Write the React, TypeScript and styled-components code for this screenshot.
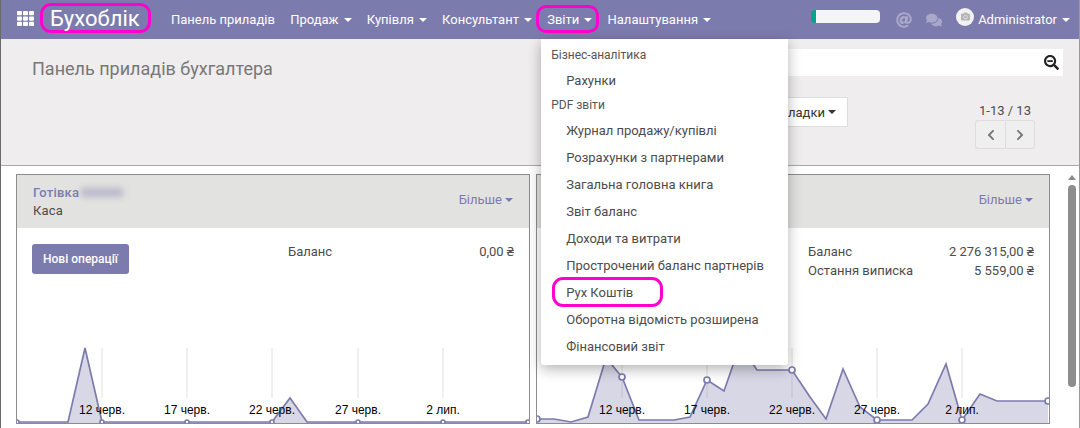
import styled, { createGlobalStyle } from 'styled-components';
import { FaAt, FaCamera, FaChevronLeft, FaChevronRight, FaComments, FaSearchMinus, FaTh } from 'react-icons/fa';

const purple = '#7c7bad';

const GlobalStyle = createGlobalStyle`
  html, body {
    margin: 0;
    height: 100%;
    overflow: hidden;
    background: #fff;
    font-family: Roboto, "Noto Sans", sans-serif;
    font-size: 13px;
    color: #4c4c4c;
  }
`;

const Page = styled.div`
  display: flex;
  flex-direction: column;
  height: 428px;
  border-left: 1px solid #6a6a6a;
  border-right: 1px solid #9a9a9a;
`;

const NavBar = styled.nav`
  display: flex;
  align-items: center;
  flex: none;
  height: 39px;
  padding: 0 9px 0 16px;
  background: ${purple};
  color: #fff;
`;

const AppsIcon = styled(FaTh)`
  flex: none;
  width: 17px;
  height: 17px;
  margin: -3px 6px 0 0;
`;

const Brand = styled.div`
  display: flex;
  align-items: center;
  flex: none;
  box-sizing: border-box;
  width: 111px;
  height: 30px;
  margin: -3px 20px 0 0;
  padding-left: 7px;
  border: 3px solid #ff00d0;
  border-radius: 11px;
  font-size: 22px;
`;

const NavItem = styled.div<{ $marked?: boolean }>`
  position: relative;
  display: flex;
  align-items: center;
  flex: none;
  height: 39px;
  margin-right: 15.25px;
  white-space: nowrap;

  ${(p) => p.$marked && `
    &::before {
      content: '';
      position: absolute;
      top: 5px;
      left: -11px;
      right: -7px;
      height: 28px;
      box-sizing: border-box;
      border: 3px solid #ff00d0;
      border-radius: 10px;
    }
  `}
`;

const Caret = styled.span<{ $gap?: number }>`
  flex: none;
  width: 0;
  height: 0;
  margin-left: ${(p) => p.$gap ?? 5}px;
  border-top: 4px solid currentColor;
  border-left: 4px solid transparent;
  border-right: 4px solid transparent;
`;

const NavRight = styled.div`
  display: flex;
  align-items: center;
  margin-left: auto;
`;

const Progress = styled.div`
  width: 69px;
  height: 13px;
  margin: -6px 16px 0 0;
  box-sizing: border-box;
  border-left: 5px solid #00a48c;
  border-radius: 4px;
  background: #f5f5f5;
`;

const MutedIcon = styled.span`
  display: flex;
  align-items: center;
  margin-right: 14px;
  font-size: 16px;
  color: #a9a8cb;
`;

const Avatar = styled.div`
  display: flex;
  align-items: center;
  justify-content: center;
  width: 18px;
  height: 18px;
  margin: -6px 4px 0 0;
  border-radius: 50%;
  background: #f2f2f2;
  font-size: 9px;
  color: #b5b5b5;
`;

const UserName = styled.div`
  display: flex;
  align-items: center;
`;

const Dropdown = styled.div`
  position: absolute;
  z-index: 5;
  top: 39px;
  left: -6px;
  width: 247px;
  height: 326px;
  box-sizing: border-box;
  padding-top: 8px;
  background: #fff;
  border-radius: 0 0 3px 3px;
  box-shadow: 0 4px 14px rgba(0, 0, 0, 0.3);
  color: #4c4c4c;
  font-weight: 400;
`;

const MenuHeader = styled.div`
  height: 16px;
  line-height: 16px;
  margin-bottom: 4px;
  padding-left: 10px;
  font-size: 12px;
  color: #555;
`;

const MenuGap = styled.div`
  height: 3px;
`;

const MenuItem = styled.div<{ $marked?: boolean }>`
  position: relative;
  height: 27px;
  line-height: 27px;
  padding-left: 25px;

  ${(p) => p.$marked && `
    &::before {
      content: '';
      position: absolute;
      top: -2px;
      left: 11px;
      width: 111px;
      height: 30px;
      box-sizing: border-box;
      border: 3px solid #ff00d0;
      border-radius: 11px;
    }
  `}
`;

const ControlPanel = styled.div`
  display: flex;
  flex: none;
  box-sizing: border-box;
  height: 127px;
  padding: 10px 16px 0 31px;
  background: #efeded;
  border-bottom: 1px solid #a8a8a8;
`;

const Breadcrumb = styled.div`
  flex: 1;
  padding-top: 10px;
  font-size: 18px;
  line-height: 20px;
  color: #777;
`;

const PanelRight = styled.div`
  display: flex;
  flex-direction: column;
  flex: none;
  width: 515px;
`;

const SearchBox = styled.div`
  display: flex;
  align-items: center;
  justify-content: flex-end;
  height: 27px;
  padding-right: 4px;
  background: #fff;
  font-size: 15px;
  color: #222;
`;

const PanelRow = styled.div`
  display: flex;
  align-items: flex-start;
  justify-content: space-between;
  margin-top: 21px;
`;

const Bookmarks = styled.div`
  display: flex;
  align-items: center;
  justify-content: flex-end;
  width: 170px;
  height: 30px;
  box-sizing: border-box;
  padding: 0 11px;
  margin-left: 130px;
  background: #fff;
  border: 1px solid #ddd;
  color: #333;
`;

const Pager = styled.div`
  display: flex;
  flex-direction: column;
  align-items: center;
  margin-right: 28px;
  margin-top: 6px;
  color: #4c4c4c;
  font-size: 13px;
  line-height: 15px;
`;

const PagerButtons = styled.div`
  display: flex;
  margin-top: 2px;
`;

const PagerButton = styled.div`
  display: flex;
  align-items: center;
  justify-content: center;
  width: 30px;
  height: 29px;
  box-sizing: border-box;
  background: #f0efef;
  border: 1px solid #ddd;
  font-size: 12px;
  color: #777;

  &:first-child {
    border-radius: 3px 0 0 3px;
    border-right: none;
  }

  &:last-child {
    border-radius: 0 3px 3px 0;
  }
`;

const Content = styled.div`
  display: flex;
  flex: 1;
  min-height: 0;
  background: #fff;
`;

const Cards = styled.div`
  display: flex;
  flex: 1;
  gap: 6px;
  padding: 8px 0 0 15px;
`;

const Card = styled.section`
  display: flex;
  flex-direction: column;
  box-sizing: border-box;
  width: 514px;
  height: 250px;
  border: 1px solid #8c8c8c;
`;

const CardHead = styled.header`
  display: flex;
  align-items: center;
  justify-content: space-between;
  flex: none;
  box-sizing: border-box;
  height: 53px;
  padding: 0 16px;
  background: #e2e2e0;
`;

const CardTitle = styled.div`
  display: flex;
  align-items: center;
  font-size: 13px;
  line-height: 18px;
  font-weight: 500;
  letter-spacing: 0.2px;
  color: ${purple};
`;

const BlurredName = styled.span`
  width: 42px;
  height: 9px;
  margin-left: 2px;
  filter: blur(3px);
  background: rgba(124, 123, 173, 0.4);
`;

const CardSub = styled.div`
  line-height: 18px;
  letter-spacing: 0.2px;
`;

const More = styled.div`
  display: flex;
  align-items: center;
  margin-top: -4px;
  font-size: 13px;
  color: ${purple};
`;

const CardBody = styled.div`
  display: flex;
  flex: none;
  box-sizing: border-box;
  height: 117px;
  padding: 16px 15px 0 15px;
`;

const ButtonSlot = styled.div`
  flex: none;
  width: 256px;
`;

const PrimaryButton = styled.div`
  display: flex;
  align-items: center;
  justify-content: center;
  width: 97px;
  height: 30px;
  background: ${purple};
  border-radius: 3px;
  color: #fff;
  font-size: 12px;
  font-weight: 500;
`;

const Stats = styled.div`
  flex: 1;
`;

const StatRow = styled.div`
  display: flex;
  justify-content: space-between;
  height: 19px;
  line-height: 15px;
`;

const Chart = styled.svg`
  display: block;
  flex: none;
  width: 512px;
  height: 78px;
`;

const AxisLabel = styled.text`
  font-family: "Liberation Sans", Arial, sans-serif;
  font-size: 12px;
  fill: #000;
  text-anchor: middle;
`;

const ScrollTrack = styled.div`
  display: flex;
  flex-direction: column;
  align-items: center;
  flex: none;
  width: 15px;
  padding-top: 9px;
`;

const ScrollArrow = styled.div`
  width: 0;
  height: 0;
  border-bottom: 5px solid #8a8a8a;
  border-left: 4px solid transparent;
  border-right: 4px solid transparent;
`;

const ScrollThumb = styled.div`
  width: 8px;
  height: 202px;
  margin-top: 5px;
  background: #8d8d8d;
  border-radius: 4px;
`;

type Pt = [number, number];

const leftLine: Pt[] = [
  [17, 422], [68, 422], [85, 348], [102, 422], [272, 422], [290, 398], [307, 422], [528, 422],
];
const leftDots: Pt[] = [[17, 422], [102, 422], [187, 422], [272, 422], [358, 422], [443, 422], [528, 422]];
const leftTicks = [
  { x: 102, label: '12 черв.' },
  { x: 187, label: '17 черв.' },
  { x: 272, label: '22 черв.' },
  { x: 358, label: '27 черв.' },
  { x: 443, label: '2 лип.' },
];

const rightLine: Pt[] = [
  [537, 419], [554, 419], [571, 422], [588, 417], [606, 358], [622, 377], [639, 420], [674, 420],
  [690, 417], [707, 380], [724, 391], [740, 345], [757, 370], [792, 370], [810, 397], [826, 419],
  [843, 369], [860, 407], [877, 420], [912, 420], [928, 404], [946, 364], [962, 420], [980, 394],
  [997, 401], [1048, 401],
];
const rightDots: Pt[] = [[537, 419], [622, 377], [707, 380], [792, 370], [877, 420], [962, 420], [1048, 401]];
const rightTicks = [
  { x: 622, label: '12 черв.' },
  { x: 707, label: '17 черв.' },
  { x: 792, label: '22 черв.' },
  { x: 877, label: '27 черв.' },
  { x: 962, label: '2 лип.' },
];

const AreaChart = ({ x0, line, dots, ticks, dotSize }: {
  x0: number;
  line: Pt[];
  dots: Pt[];
  ticks: { x: number; label: string }[];
  dotSize: number;
}) => {
  const pts = line.map((p) => p.join(',')).join(' ');
  const last = line[line.length - 1][0];
  return (
    <Chart viewBox={`${x0} 345 512 78`}>
      {ticks.map((t) => (
        <line key={t.x} x1={t.x} x2={t.x} y1={348} y2={398} stroke="#e0e0e0" />
      ))}
      <polygon points={`${line[0][0]},423 ${pts} ${last},423`} fill={purple} fillOpacity={0.3} />
      <polyline points={pts} fill="none" stroke={purple} strokeWidth={1.7} />
      {dots.map((d) => (
        <circle key={d[0]} cx={d[0]} cy={d[1]} r={dotSize} fill="#fff" stroke={purple} strokeWidth={1.7} />
      ))}
      {ticks.map((t) => (
        <AxisLabel key={t.x} x={t.x} y={414}>{t.label}</AxisLabel>
      ))}
    </Chart>
  );
};

const App = () => (
  <Page>
    <GlobalStyle />
    <NavBar>
      <AppsIcon />
      <Brand>Бухоблік</Brand>
      <NavItem>Панель приладів</NavItem>
      <NavItem>Продаж <Caret /></NavItem>
      <NavItem>Купівля <Caret /></NavItem>
      <NavItem>Консультант <Caret /></NavItem>
      <NavItem $marked>
        Звіти <Caret />
        <Dropdown>
          <MenuHeader>Бізнес-аналітика</MenuHeader>
          <MenuItem>Рахунки</MenuItem>
          <MenuGap />
          <MenuHeader>PDF звіти</MenuHeader>
          <MenuItem>Журнал продажу/купівлі</MenuItem>
          <MenuItem>Розрахунки з партнерами</MenuItem>
          <MenuItem>Загальна головна книга</MenuItem>
          <MenuItem>Звіт баланс</MenuItem>
          <MenuItem>Доходи та витрати</MenuItem>
          <MenuItem>Прострочений баланс партнерів</MenuItem>
          <MenuItem $marked>Рух Коштів</MenuItem>
          <MenuItem>Оборотна відомість розширена</MenuItem>
          <MenuItem>Фінансовий звіт</MenuItem>
        </Dropdown>
      </NavItem>
      <NavItem>Налаштування <Caret /></NavItem>
      <NavRight>
        <Progress />
        <MutedIcon><FaAt /></MutedIcon>
        <MutedIcon><FaComments /></MutedIcon>
        <Avatar><FaCamera /></Avatar>
        <UserName>Administrator <Caret /></UserName>
      </NavRight>
    </NavBar>
    <ControlPanel>
      <Breadcrumb>Панель приладів бухгалтера</Breadcrumb>
      <PanelRight>
        <SearchBox><FaSearchMinus /></SearchBox>
        <PanelRow>
          <Bookmarks>Закладки <Caret $gap={3} /></Bookmarks>
          <Pager>
            1-13 / 13
            <PagerButtons>
              <PagerButton><FaChevronLeft /></PagerButton>
              <PagerButton><FaChevronRight /></PagerButton>
            </PagerButtons>
          </Pager>
        </PanelRow>
      </PanelRight>
    </ControlPanel>
    <Content>
      <Cards>
        <Card>
          <CardHead>
            <div>
              <CardTitle>Готівка<BlurredName /></CardTitle>
              <CardSub>Каса</CardSub>
            </div>
            <More>Більше <Caret $gap={3} /></More>
          </CardHead>
          <CardBody>
            <ButtonSlot><PrimaryButton>Нові операції</PrimaryButton></ButtonSlot>
            <Stats>
              <StatRow><span>Баланс</span><span>0,00 ₴</span></StatRow>
            </Stats>
          </CardBody>
          <AreaChart x0={17} line={leftLine} dots={leftDots} ticks={leftTicks} dotSize={2} />
        </Card>
        <Card>
          <CardHead>
            <div />
            <More>Більше <Caret $gap={3} /></More>
          </CardHead>
          <CardBody>
            <ButtonSlot />
            <Stats>
              <StatRow><span>Баланс</span><span>2 276 315,00 ₴</span></StatRow>
              <StatRow><span>Остання виписка</span><span>5 559,00 ₴</span></StatRow>
            </Stats>
          </CardBody>
          <AreaChart x0={537} line={rightLine} dots={rightDots} ticks={rightTicks} dotSize={3} />
        </Card>
      </Cards>
      <ScrollTrack>
        <ScrollArrow />
        <ScrollThumb />
      </ScrollTrack>
    </Content>
  </Page>
);

export default App;
